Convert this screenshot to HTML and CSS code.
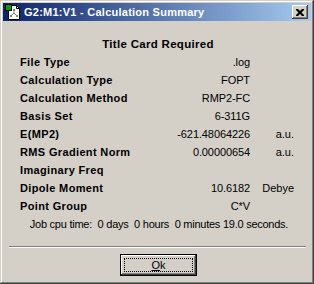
FILE: index.html
```html
<!DOCTYPE html>
<html lang="en">
<head>
    <meta charset="UTF-8">
    <title>G2:M1:V1 - Calculation Summary</title>
    <link rel="stylesheet" href="styles.css">
</head>
<body>
    <div class="window">
        <div class="titlebar">
            <svg class="app-icon" width="16" height="16" viewBox="0 0 16 16">
                <path d="M3.5 1.5 H11.5 L14.5 4.5 V15.5 H3.5 Z" fill="#fff" stroke="#000"/>
                <path d="M11.5 1.5 V4.5 H14.5" fill="none" stroke="#000"/>
                <g stroke="#808080" fill="none">
                    <path d="M9 6 V9 L6 12 M9 9 L12 12"/>
                </g>
                <g fill="#808080">
                    <rect x="8" y="5" width="2" height="2"/>
                    <rect x="5" y="11" width="2" height="2"/>
                    <rect x="11" y="11" width="2" height="2"/>
                </g>
                <rect x="0.5" y="0.5" width="6" height="6" fill="#00a000" stroke="#000"/>
            </svg>
            <span class="caption">G2:M1:V1 - Calculation Summary</span>
            <button class="close-btn">
                <svg width="8" height="7" viewBox="0 0 8 7">
                    <path d="M0 0h2l2 2 2-2h2v1l-2.5 2.5L8 6v1H6L4 5 2 7H0V6l2.5-2.5L0 1z" fill="#000"/>
                </svg>
            </button>
        </div>

        <div class="content">
            <div class="heading">Title Card Required</div>

            <div class="summary">
                <div class="label">File Type</div><div class="value">.log</div><div class="unit"></div>
                <div class="label">Calculation Type</div><div class="value">FOPT</div><div class="unit"></div>
                <div class="label">Calculation Method</div><div class="value">RMP2-FC</div><div class="unit"></div>
                <div class="label">Basis Set</div><div class="value">6-311G</div><div class="unit"></div>
                <div class="label">E(MP2)</div><div class="value">-621.48064226</div><div class="unit">a.u.</div>
                <div class="label">RMS Gradient Norm</div><div class="value">0.00000654</div><div class="unit">a.u.</div>
                <div class="label">Imaginary Freq</div><div class="value"></div><div class="unit"></div>
                <div class="label">Dipole Moment</div><div class="value">10.6182</div><div class="unit">Debye</div>
                <div class="label">Point Group</div><div class="value">C*V</div><div class="unit"></div>
            </div>

            <div class="cpu-time">Job cpu time:  0 days  0 hours  0 minutes 19.0 seconds.</div>
        </div>

        <div class="separator"></div>

        <div class="actions">
            <button class="ok-btn"><span class="focus"><u>O</u>k</span></button>
        </div>
    </div>
</body>
</html>
```

FILE: styles.css
```css
* {
    margin: 0;
    padding: 0;
    box-sizing: border-box;
}

body {
    font-family: 'Liberation Sans', Arial, sans-serif;
    font-size: 11px;
    color: #000;
    background: #d4d0c8;
}

.window {
    width: 314px;
    height: 284px;
    padding: 3px;
    background: #d4d0c8;
    box-shadow:
        inset -1px -1px #404040,
        inset 1px 1px #d4d0c8,
        inset -2px -2px #808080,
        inset 2px 2px #fff;
}

.titlebar {
    height: 18px;
    display: flex;
    align-items: center;
    padding-left: 2px;
    padding-right: 3px;
    background: linear-gradient(to right, #0a246a, #a6caf0);
}

.app-icon {
    display: block;
    margin-right: 3px;
}

.caption {
    flex: 1;
    color: #fff;
    font-weight: bold;
    font-size: 11px;
    letter-spacing: 0.25px;
}

.close-btn {
    width: 16px;
    height: 14px;
    border: none;
    background: #d4d0c8;
    display: flex;
    align-items: center;
    justify-content: center;
    box-shadow:
        inset -1px -1px #404040,
        inset 1px 1px #fff,
        inset -2px -2px #808080;
}

.close-btn svg {
    display: block;
}

.content {
    padding-top: 14px;
    line-height: 18px;
}

.heading {
    text-align: center;
    font-weight: bold;
    font-size: 11.5px;
    letter-spacing: 0.3px;
    padding-left: 2px;
}

.summary {
    display: grid;
    grid-template-columns: 130px 100px 44px;
    padding-left: 17px;
}

.label {
    font-weight: bold;
    letter-spacing: 0.35px;
}

.value,
.unit {
    text-align: right;
}

.value {
    letter-spacing: -0.1px;
}

.cpu-time {
    white-space: pre;
    text-align: center;
    letter-spacing: -0.25px;
    padding-left: 4px;
}

.separator {
    margin: 13px 5px 0 6px;
    height: 2px;
    border-top: 1px solid #808080;
    border-bottom: 1px solid #fff;
}

.actions {
    display: flex;
    justify-content: center;
    padding-top: 6px;
    padding-left: 3px;
}

.ok-btn {
    width: 77px;
    height: 22px;
    border: 1px solid #000;
    background: #d4d0c8;
    font-family: 'Liberation Sans', Arial, sans-serif;
    font-size: 11px;
    color: #000;
    padding: 3px;
    box-shadow:
        inset -1px -1px #404040,
        inset 1px 1px #fff,
        inset -2px -2px #808080;
}

.focus {
    display: flex;
    align-items: center;
    justify-content: center;
    height: 100%;
    border: 1px dotted #000;
}
```
